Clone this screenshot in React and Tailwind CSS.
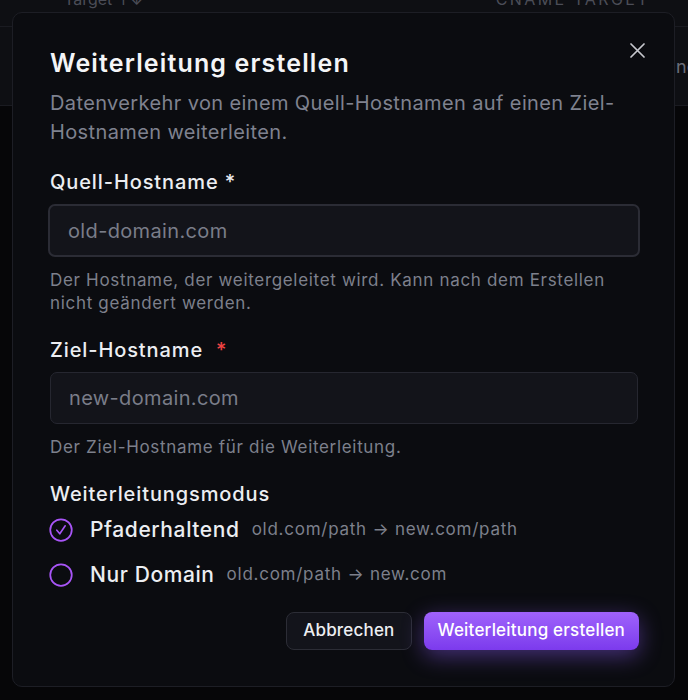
import React from "react";

const FONT = { fontFamily: "Inter, 'Noto Sans', sans-serif" };

function RadioMark({ checked }) {
  return (
    <svg width="24" height="24" viewBox="0 0 24 24" fill="none" className="shrink-0 -ml-[1px]">
      <circle cx="12" cy="12" r="10.75" stroke="#a855f7" strokeWidth="1.75" />
      {checked && (
        <path d="M7.8 12.2l3 3.6L16.2 7.8" stroke="#a855f7" strokeWidth="1.6" strokeLinecap="round" strokeLinejoin="round" />
      )}
    </svg>
  );
}

function ModeOption({ checked, label, hint }) {
  return (
    <label className="flex items-center h-[30px] cursor-pointer">
      <RadioMark checked={checked} />
      <span className="ml-[17px] text-[21px] font-medium text-[#eceef2] tracking-[0.6px]">{label}</span>
      <span className="ml-[12px] text-[17px] text-[#7d808c] tracking-[0.75px]">{hint}</span>
    </label>
  );
}

function Field({ label, required, placeholder, hint, focused }) {
  return (
    <div className="flex flex-col">
      <div className="text-[20px] leading-[28px] font-medium tracking-[0.9px] text-[#eceef2]">
        {label}
        {required === "plain" && <span> *</span>}
        {required === "red" && <span className="ml-[13px] text-[#ef4444]">*</span>}
      </div>
      <input
        placeholder={placeholder}
        className={`mt-[8px] rounded-[7px] bg-[#13141a] text-[20px] tracking-[0.35px] text-[#eceef2] placeholder:text-[#7a7d89] outline-none ${
          focused
            ? "-ml-[2px] w-[calc(100%+4px)] h-[53px] border-2 border-[#2b2c35] px-[18px]"
            : "w-full h-[52px] border border-[#262730] px-[18px]"
        }`}
        style={FONT}
      />
      <p className="mt-[12px] text-[17px] leading-[23px] tracking-[0.68px] text-[#7d808c]">{hint}</p>
    </div>
  );
}

export default function App() {
  return (
    <div className="relative h-[700px] w-[688px] overflow-hidden bg-[#060608]" style={FONT}>
      {/* table behind the dialog */}
      <div className="bg-[#0e0f13]">
        <div className="flex h-[27px] items-start justify-between border-b border-[#1a1b21] pl-[64px] pr-[38px] text-[16px] text-[#4b4d57]">
          <span className="-mt-[13px]">Target ↑↓</span>
          <span className="-mt-[13px] tracking-[2.4px]">CNAME TARGET</span>
        </div>
        <div className="flex h-[79px] items-center border-b border-[#1a1b21] whitespace-nowrap text-[18px] text-[#6b6e79]">
          <span className="pl-[676px]">ne</span>
        </div>
      </div>

      {/* dialog */}
      <div className="absolute left-[12px] top-[12px] flex h-[675px] w-[663px] flex-col rounded-[10px] border border-[#1d1e25] bg-[#0b0c10] pl-[37px] pr-[36px] pt-[34px]">
        <button className="absolute right-[23px] top-[23px] flex h-[28px] w-[28px] items-center justify-center text-[#c7c8ce]">
          <svg width="15" height="15" viewBox="0 0 15 15" fill="none">
            <path d="M1 1l13 13M14 1L1 14" stroke="currentColor" strokeWidth="1.7" strokeLinecap="round" />
          </svg>
        </button>

        <h2 className="text-[25px] leading-[32px] font-semibold tracking-[1.15px] text-[#f4f5f7]">Weiterleitung erstellen</h2>
        <p className="mt-[10px] text-[20px] leading-[29px] tracking-[0.38px] text-[#7f828f]">
          Datenverkehr von einem Quell-Hostnamen auf einen Ziel-Hostnamen weiterleiten.
        </p>

        <div className="mt-[21px]">
          <Field
            label="Quell-Hostname"
            required="plain"
            placeholder="old-domain.com"
            hint="Der Hostname, der weitergeleitet wird. Kann nach dem Erstellen nicht geändert werden."
            focused
          />
        </div>

        <div className="mt-[21px]">
          <Field
            label="Ziel-Hostname"
            required="red"
            placeholder="new-domain.com"
            hint="Der Ziel-Hostname für die Weiterleitung."
          />
        </div>

        <div className="mt-[21px] text-[20px] leading-[28px] font-medium tracking-[0.9px] text-[#eceef2]">Weiterleitungsmodus</div>
        <div className="mt-[7px] flex flex-col gap-[15px]">
          <ModeOption checked label="Pfaderhaltend" hint="old.com/path → new.com/path" />
          <ModeOption label="Nur Domain" hint="old.com/path → new.com" />
        </div>

        <div className="mt-[22px] -mr-[1px] flex justify-end gap-[12px]">
          <button className="h-[38px] rounded-[8px] border border-[#2c2d36] bg-[#13141b] px-[16px] text-[17px] font-medium tracking-[0.2px] text-[#eceef2]">
            Abbrechen
          </button>
          <button className="h-[38px] rounded-[8px] bg-gradient-to-b from-[#a062fb] to-[#7c3aed] px-[14px] text-[17px] font-medium tracking-[0.2px] text-white shadow-[0_6px_22px_rgba(139,92,246,0.45)]">
            Weiterleitung erstellen
          </button>
        </div>
      </div>
    </div>
  );
}
